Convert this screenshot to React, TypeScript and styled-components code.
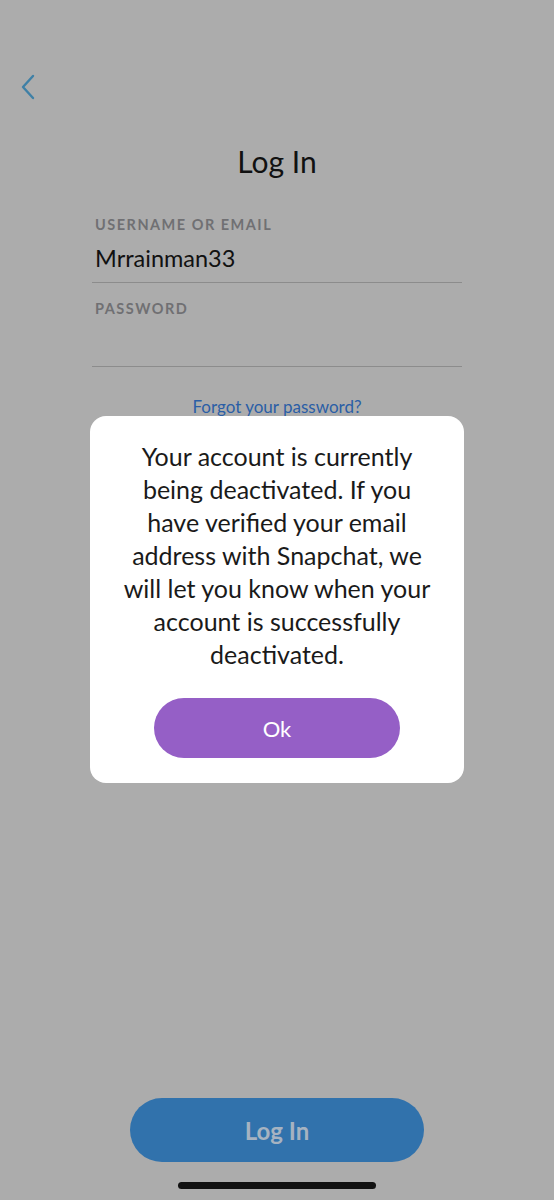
import React from "react";
import styled, { createGlobalStyle } from "styled-components";

const GlobalStyle = createGlobalStyle`
  html, body {
    margin: 0;
    padding: 0;
    background: #acacac;
  }
  * {
    box-sizing: border-box;
  }
`;

const Page = styled.div`
  position: relative;
  width: 554px;
  height: 1200px;
  overflow: hidden;
  display: flex;
  flex-direction: column;
  background: #acacac;
  font-family: Lato, "Noto Sans", sans-serif;
  color: #111;
`;

const TopBar = styled.div`
  height: 144px;
  padding: 74px 0 0 20px;
`;

const BackButton = styled.button`
  border: none;
  background: none;
  padding: 0;
  width: 16px;
  height: 26px;
  display: flex;
`;

const Title = styled.h1`
  margin: 0;
  font-size: 30px;
  font-weight: 400;
  text-align: center;
  line-height: 34px;
`;

const Form = styled.div`
  display: flex;
  flex-direction: column;
  padding: 0 92px;
  margin-top: 38px;
`;

const Field = styled.div`
  display: flex;
  flex-direction: column;
  border-bottom: 1px solid #8c8c8c;
  height: 67px;
  padding: 0 0 0 3px;
  & + & {
    height: 84px;
    padding-top: 17px;
  }
`;

const Label = styled.label`
  font-size: 14.5px;
  font-weight: 700;
  letter-spacing: 1.5px;
  color: #707073;
  line-height: 18px;
`;

const Value = styled.div`
  font-size: 23.5px;
  line-height: 30px;
  margin-top: 9px;
  color: #111;
`;

const ForgotLink = styled.a`
  align-self: center;
  margin-top: 29px;
  font-size: 17px;
  color: #2a5ea6;
  text-decoration: none;
`;

const Spacer = styled.div`
  flex: 1;
`;

const LoginButton = styled.button`
  align-self: center;
  width: 294px;
  height: 64px;
  border: none;
  border-radius: 32px;
  background: #3172ac;
  color: #a6b3c1;
  font-family: inherit;
  font-size: 24px;
  font-weight: 700;
`;

const HomeIndicator = styled.div`
  align-self: center;
  width: 198px;
  height: 7px;
  border-radius: 4px;
  background: #111;
  margin: 20px 0 11px;
`;

const Dialog = styled.div`
  position: absolute;
  left: 90px;
  top: 416px;
  width: 374px;
  background: #fff;
  border-radius: 16px;
  padding: 24px 12px 25px;
  display: flex;
  flex-direction: column;
  align-items: center;
`;

const Message = styled.p`
  margin: 0;
  font-size: 25px;
  line-height: 33px;
  text-align: center;
  color: #1a1a1a;
  white-space: nowrap;
`;

const OkButton = styled.button`
  margin-top: 27px;
  width: 246px;
  height: 60px;
  border: none;
  border-radius: 30px;
  background: #955fc6;
  color: #fff;
  font-family: inherit;
  font-size: 22px;
`;

const messageLines = [
  "Your account is currently",
  "being deactivated. If you",
  "have verified your email",
  "address with Snapchat, we",
  "will let you know when your",
  "account is successfully",
  "deactivated.",
];

function Chevron() {
  return (
    <svg width="16" height="26" viewBox="0 0 16 26" fill="none">
      <path
        d="M13 2 L3 13 L13 24"
        stroke="#3f80a6"
        strokeWidth="2.4"
        strokeLinecap="round"
        strokeLinejoin="round"
      />
    </svg>
  );
}

export default function App() {
  return (
    <>
      <GlobalStyle />
      <Page>
        <TopBar>
          <BackButton aria-label="Back">
            <Chevron />
          </BackButton>
        </TopBar>
        <Title>Log In</Title>
        <Form>
          <Field>
            <Label>USERNAME OR EMAIL</Label>
            <Value>Mrrainman33</Value>
          </Field>
          <Field>
            <Label>PASSWORD</Label>
            <Value />
          </Field>
        </Form>
        <ForgotLink href="#">Forgot your password?</ForgotLink>
        <Spacer />
        <LoginButton>Log In</LoginButton>
        <HomeIndicator />
        <Dialog>
          <Message>
            {messageLines.map((line, i) => (
              <React.Fragment key={i}>
                {line}
                {i < messageLines.length - 1 && <br />}
              </React.Fragment>
            ))}
          </Message>
          <OkButton>Ok</OkButton>
        </Dialog>
      </Page>
    </>
  );
}
